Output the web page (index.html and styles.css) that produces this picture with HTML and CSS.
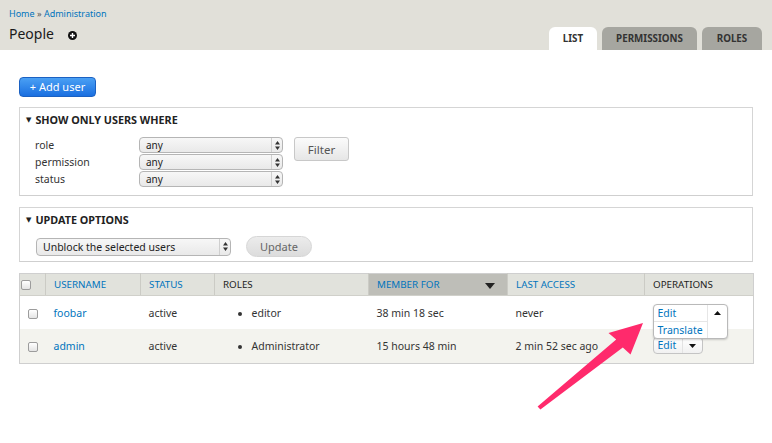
FILE: index.html
```html
<!DOCTYPE html>
<html>
<head>
<meta charset="utf-8">
<title>People</title>
<link rel="stylesheet" href="styles.css">
</head>
<body>
<header class="head">
  <div class="head-left">
    <nav class="crumbs"><a href="#">Home</a> » <a href="#">Administration</a></nav>
    <h1 class="title">People
      <svg class="shortcut" width="9" height="9" viewBox="0 0 9 9"><circle cx="4.5" cy="4.5" r="4.5" fill="#111"/><path d="M4.5 2v5M2 4.5h5" stroke="#fff" stroke-width="1.4"/></svg>
    </h1>
  </div>
  <ul class="tabs">
    <li class="tab active">LIST</li>
    <li class="tab">PERMISSIONS</li>
    <li class="tab">ROLES</li>
  </ul>
</header>

<main class="content">
  <a class="btn-primary" href="#">+ Add user</a>

  <section class="fieldset filters">
    <div class="legend"><span class="tri">▼</span>SHOW ONLY USERS WHERE</div>
    <div class="filter-body">
      <div class="filter-grid">
        <label class="flabel">role</label>
        <div class="select sel-filter"><span class="sel-text">any</span><span class="sel-arrows"><svg width="5" height="9" viewBox="0 0 5 9"><path d="M0 3.5L2.5 0 5 3.5zM0 5.5L2.5 9 5 5.5z" fill="#333"/></svg></span></div>
        <label class="flabel">permission</label>
        <div class="select sel-filter"><span class="sel-text">any</span><span class="sel-arrows"><svg width="5" height="9" viewBox="0 0 5 9"><path d="M0 3.5L2.5 0 5 3.5zM0 5.5L2.5 9 5 5.5z" fill="#333"/></svg></span></div>
        <label class="flabel">status</label>
        <div class="select sel-filter"><span class="sel-text">any</span><span class="sel-arrows"><svg width="5" height="9" viewBox="0 0 5 9"><path d="M0 3.5L2.5 0 5 3.5zM0 5.5L2.5 9 5 5.5z" fill="#333"/></svg></span></div>
      </div>
      <button class="btn-filter">Filter</button>
    </div>
  </section>

  <section class="fieldset updates">
    <div class="legend"><span class="tri">▼</span>UPDATE OPTIONS</div>
    <div class="update-body">
      <div class="select sel-update"><span class="sel-text">Unblock the selected users</span><span class="sel-arrows"><svg width="5" height="9" viewBox="0 0 5 9"><path d="M0 3.5L2.5 0 5 3.5zM0 5.5L2.5 9 5 5.5z" fill="#333"/></svg></span></div>
      <button class="btn-update">Update</button>
    </div>
  </section>

  <table class="users">
    <colgroup>
      <col class="c-check"><col class="c-user"><col class="c-status"><col class="c-roles"><col class="c-member"><col class="c-access"><col class="c-ops">
    </colgroup>
    <thead>
      <tr>
        <th class="th-check"><span class="checkbox"></span></th>
        <th><a href="#">USERNAME</a></th>
        <th><a href="#">STATUS</a></th>
        <th>ROLES</th>
        <th class="sorted"><a href="#">MEMBER FOR</a><svg class="sort-icon" width="10" height="6" viewBox="0 0 10 6"><path d="M0 0h10L5 6z" fill="#222"/></svg></th>
        <th><a href="#">LAST ACCESS</a></th>
        <th>OPERATIONS</th>
      </tr>
    </thead>
    <tbody>
      <tr class="row-odd">
        <td class="td-check"><span class="checkbox"></span></td>
        <td><a href="#">foobar</a></td>
        <td>active</td>
        <td><ul class="roles"><li>editor</li></ul></td>
        <td>38 min 18 sec</td>
        <td>never</td>
        <td class="td-ops">
          <div class="ops">
            <div class="dropbutton open">
              <div class="db-items">
                <a class="db-item first" href="#">Edit</a>
                <a class="db-item" href="#">Translate</a>
              </div>
              <span class="db-toggle"><svg width="7" height="4" viewBox="0 0 7 4"><path d="M0 4L3.5 0 7 4z" fill="#111"/></svg></span>
            </div>
          </div>
        </td>
      </tr>
      <tr class="row-even">
        <td class="td-check"><span class="checkbox"></span></td>
        <td><a href="#">admin</a></td>
        <td>active</td>
        <td><ul class="roles"><li>Administrator</li></ul></td>
        <td>15 hours 48 min</td>
        <td>2 min 52 sec ago</td>
        <td class="td-ops">
          <div class="dropbutton closed">
            <a class="db-item" href="#">Edit</a>
            <span class="db-toggle"><svg width="7" height="4" viewBox="0 0 7 4"><path d="M0 0h7L3.5 4z" fill="#111"/></svg></span>
          </div>
        </td>
      </tr>
    </tbody>
  </table>
</main>

<svg class="callout" width="772" height="443" viewBox="0 0 772 443">
  <polygon points="537.6,406.6 540.4,409.4 622.8,347.6 630.5,354.5 643,323 608.5,333 616.2,339.4" fill="#ff2a6c"/>
</svg>
</body>
</html>
```

FILE: styles.css
```css
* { box-sizing: border-box; }
html, body { margin: 0; padding: 0; }
body {
  font-family: "Noto Sans", "DejaVu Sans", sans-serif;
  font-size: 10.5px;
  color: #333;
  background: #fff;
  width: 772px;
  height: 443px;
  overflow: hidden;
  position: relative;
}
a { color: #0074bd; text-decoration: none; }

/* Header */
.head {
  background: #e1e0d9;
  height: 50px;
  display: flex;
  justify-content: space-between;
  align-items: flex-end;
  padding: 0 10px 0 9px;
}
.head-left { align-self: stretch; padding-top: 8px; }
.crumbs { font-size: 9px; line-height: 12px; color: #555; }
.title {
  margin: 5px 0 0;
  font-size: 14px;
  font-weight: normal;
  line-height: 18px;
  color: #1a1a1a;
  display: flex;
  align-items: center;
}
.shortcut { margin-left: 14px; margin-top: 2px; }

.tabs {
  list-style: none;
  margin: 0;
  padding: 0;
  display: flex;
  gap: 5px;
}
.tab {
  height: 23px;
  line-height: 24px;
  background: #a6a6a0;
  border-radius: 6px 6px 0 0;
  font-size: 9.8px;
  font-weight: bold;
  color: #333;
  text-align: center;
}
.tab:nth-child(1) { width: 48px; }
.tab:nth-child(2) { width: 95px; }
.tab:nth-child(3) { width: 60px; }
.tab.active { background: #fff; }

/* Content */
.content { padding: 27px 19px 0; }
.btn-primary {
  display: inline-block;
  height: 20px;
  line-height: 18px;
  width: 77px;
  text-align: center;
  color: #fff;
  font-size: 11px;
  border: 1px solid #1b61c2;
  border-radius: 4px;
  background: linear-gradient(#4aa0f4, #1a6fe0);
}

.fieldset {
  border: 1px solid #d5d5d5;
  border-bottom-color: #cfcfcf;
}
.filters { margin-top: 10px; height: 89px; }
.updates { margin-top: 11px; height: 55px; }
.legend {
  padding: 5px 6px 0;
  line-height: 14px;
  font-size: 10.8px;
  font-weight: bold;
  color: #222;
  display: flex;
  align-items: center;
}
.tri { font-size: 7px; margin-right: 4px; }

.filter-body {
  display: flex;
  align-items: flex-start;
  padding: 10px 15px 0;
}
.filter-grid {
  display: grid;
  grid-template-columns: 104px 144px;
  row-gap: 1px;
  align-items: center;
}
.flabel { line-height: 16px; }

.select {
  display: flex;
  align-items: center;
  border: 1px solid #b5b5b5;
  border-radius: 4px;
  background: linear-gradient(#f7f7f7, #e9e9e9);
  color: #222;
}
.sel-text { flex: 1; padding-left: 6px; white-space: nowrap; }
.sel-arrows {
  width: 11px;
  align-self: stretch;
  border-left: 1px solid #cfcfcf;
  display: flex;
  align-items: center;
  justify-content: center;
}
.sel-filter { height: 16px; font-size: 10px; }
.sel-update { width: 195px; height: 18px; font-size: 10.5px; }

.btn-filter {
  margin-left: 11px;
  width: 55px;
  height: 24px;
  border: 1px solid #c8c8c8;
  border-radius: 3px;
  background: linear-gradient(#fbfbfb, #e6e6e6);
  color: #555;
  font-family: inherit;
  font-size: 11.5px;
  padding: 0;
}

.update-body {
  display: flex;
  align-items: center;
  padding: 9px 16px 0;
}
.btn-update {
  margin-left: 15px;
  width: 66px;
  height: 21px;
  border: 1px solid #d6d6d6;
  border-radius: 11px;
  background: linear-gradient(#ececec, #dcdcdc);
  color: #666;
  font-family: inherit;
  font-size: 11px;
  padding: 0;
}

/* Table */
.users {
  margin-top: 11px;
  width: 734px;
  border-collapse: collapse;
  table-layout: fixed;
  border: 1px solid #cfcfcf;
}
.c-check { width: 26px; }
.c-user { width: 95px; }
.c-status { width: 74px; }
.c-roles { width: 154px; }
.c-member { width: 139px; }
.c-access { width: 137px; }
.c-ops { width: 109px; }

.users th {
  height: 22px;
  background: #e1e2dc;
  font-size: 9.8px;
  font-weight: normal;
  text-align: left;
  padding: 0 8px;
  color: #222;
  border-left: 1px solid #cbcbc5;
  border-bottom: 1px solid #d0d0ca;
  white-space: nowrap;
}
.users th:first-child { border-left: 0; }
.users th.sorted { background: #bebeb8; position: relative; }
.sort-icon { position: absolute; right: 12px; top: 9px; }
.th-check, .td-check { text-align: center; padding: 0 !important; }

.users td { padding: 0 8px; white-space: nowrap; }
.row-odd { height: 33px; background: #fff; }
.row-even { height: 34px; background: #f3f3ee; }

.checkbox {
  display: inline-block;
  width: 10px;
  height: 10px;
  border: 1px solid #9c9c9c;
  border-radius: 2px;
  background: linear-gradient(#fff, #e4e4e4);
  vertical-align: middle;
  margin-left: 1px;
}

.roles { margin: 0; padding-left: 29px; list-style: disc; }

/* Dropbuttons */
.td-ops { position: relative; }
.ops { height: 33px; }
.dropbutton {
  display: flex;
  border: 1px solid #c4c4c4;
  border-radius: 4px;
  font-size: 10.5px;
}
.dropbutton.open {
  position: absolute;
  top: 8px;
  left: 8px;
  width: 75px;
  height: 35px;
  background: #fff;
  border-color: #b9b9b9;
  box-shadow: 0 1px 2px rgba(0,0,0,0.18);
  z-index: 5;
}
.db-items { flex: 1; display: flex; flex-direction: column; }
.db-item { display: block; padding-left: 4px; line-height: 16px; }
.open .db-item { height: 17px; }
.open .db-item.first { border-bottom: 1px solid #e6e6e6; }
.open .db-toggle {
  width: 20px;
  border-left: 1px solid #e6e6e6;
  display: flex;
  justify-content: center;
  padding-top: 6px;
}
.dropbutton.closed {
  width: 50px;
  height: 17px;
  background: linear-gradient(#fff, #f1f1f1);
  align-items: center;
}
.closed .db-item { width: 29px; border-right: 1px solid #e3e3e3; line-height: 15px; }
.closed .db-toggle { flex: 1; display: flex; justify-content: center; align-items: center; }

.callout {
  position: absolute;
  left: 0;
  top: 0;
  pointer-events: none;
  z-index: 10;
}
```
